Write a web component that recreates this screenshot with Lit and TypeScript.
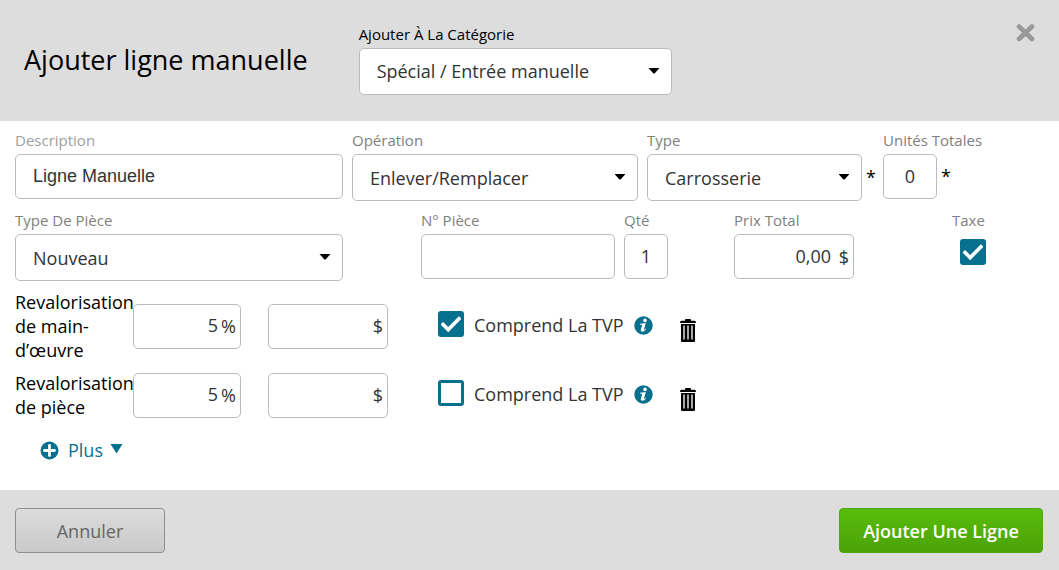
import { LitElement, html, css } from "lit";
import { customElement } from "lit/decorators.js";

const caret = html`<svg class="caret" width="12" height="6" viewBox="0 0 12 6" aria-hidden="true">
  <path d="M0.5 0h11L6.8 5.2q-.8.8-1.6 0z" fill="#000" />
</svg>`;

const infoIcon = html`<svg width="19" height="19" viewBox="0 0 19 19" aria-hidden="true">
  <circle cx="9.5" cy="9.5" r="9.2" fill="#08708f" />
  <circle cx="11" cy="4.4" r="1.8" fill="#fff" />
  <path
    d="M6.2 7.800l5.600-.8-1.800 6.400c-.1.5.1.7.5.4.4-.2.8-.7 1.100-1.100l.5.4c-.9 1.600-2.100 2.700-3.600 2.700-1.400 0-2-.9-1.600-2.200l1.100-3.900c.2-.7 0-.9-.6-.9h-1.400z"
    fill="#fff"
  />
</svg>`;

const trashIcon = html`<svg width="16" height="23" viewBox="0 0 16 23" aria-hidden="true">
  <path d="M5 1.8V.8Q5 0 6 0h4q1 0 1 .8v1h3.500q1.500 0 1.500 2.200H0q0-2.200 1.500-2.200z" fill="#000" />
  <path d="M1 5h14v17q0 1-1 1H2q-1 0-1-1z" fill="#000" />
  <path d="M4 6.500v14M8 6.500v14M12 6.500v14" stroke="#fff" stroke-width="1.300" fill="none" />
</svg>`;

@customElement("app-root")
export class AppRoot extends LitElement {
  static styles = css`
    :host {
      display: flex;
      flex-direction: column;
      min-height: 100vh;
      background: #fff;
      color: #000;
      font-family: "Open Sans", "Noto Sans", sans-serif;
      font-size: 18px;
      line-height: 24px;
    }
    * {
      box-sizing: border-box;
    }
    header {
      display: flex;
      align-items: center;
      padding: 24px 24px 26px;
      background: #ddd;
    }
    h1 {
      margin: 0;
      font-size: 27px;
      line-height: 36px;
      font-weight: 400;
    }
    .category {
      width: 313px;
      margin-left: 51px;
    }
    button {
      font-family: inherit;
      cursor: pointer;
    }
    .plain {
      display: flex;
      padding: 0;
      border: 0;
      background: none;
    }
    .close {
      align-self: flex-start;
      margin-left: auto;
    }
    main {
      flex: 1;
      padding: 9px 15px 28px;
    }
    .row {
      display: grid;
      column-gap: 9px;
      align-items: start;
      margin-bottom: 9px;
    }
    .first {
      grid-template-columns: 328fr 286fr 227fr 161px;
    }
    .second {
      grid-template-columns: 328fr 263fr 44px 177px 181px;
    }
    .part {
      padding-left: 78px;
      margin-left: -9px;
    }
    .price {
      padding-left: 57px;
    }
    .tax {
      padding-left: 89px;
    }
    .tax input {
      margin: 9px 8px 0;
    }
    .field label {
      display: block;
      margin-bottom: 4px;
      font-size: 15px;
      line-height: 20px;
      color: #808080;
      white-space: nowrap;
    }
    .field .muted {
      color: #a0a0a0;
    }
    .category.field label {
      color: #000;
    }
    .inline {
      display: flex;
      align-items: center;
      gap: 4px;
    }
    .star {
      width: 8px;
      padding-bottom: 2px;
    }
    .box {
      display: grid;
      flex: 1;
      align-items: center;
    }
    .box > * {
      grid-area: 1 / 1;
    }
    .caret,
    .suffix {
      justify-self: end;
      pointer-events: none;
    }
    .caret {
      margin: 0 12px 2px 0;
    }
    .suffix {
      margin-right: 5px;
      color: #333;
    }
    select,
    .text {
      width: 100%;
      min-width: 0;
      margin: 0;
      border: 1px solid #bbb;
      border-radius: 5px;
      background: #fff;
      color: #333;
      font: inherit;
      appearance: none;
    }
    select {
      height: 47px;
      padding: 0 30px 0 17px;
    }
    .category select {
      padding-bottom: 2px;
    }
    .text {
      height: 45px;
      padding: 0 17px;
    }
    .arial {
      font-family: "Liberation Sans", Arial, sans-serif;
    }
    .center {
      padding: 0 0 2px;
      text-align: center;
    }
    .text.units {
      width: 54px;
    }
    .right {
      padding: 0 22px 2px 4px;
      text-align: right;
    }
    .check {
      display: block;
      flex: none;
      width: 26px;
      height: 26px;
      border: 3px solid #08708f;
      border-radius: 3px;
      background: #fff;
      appearance: none;
      cursor: pointer;
    }
    .check:checked {
      background: #08708f
        url("data:image/svg+xml,%3Csvg xmlns='http://www.w3.org/2000/svg' viewBox='0 0 20 20'%3E%3Cpath d='M.8 9.200l6.400 6.400L19.200 3.500' fill='none' stroke='%23fff' stroke-width='3.600'/%3E%3C/svg%3E")
        center / 20px 20px no-repeat;
    }
    .markup {
      display: flex;
      align-items: center;
      margin-bottom: 9px;
    }
    .name {
      width: 118px;
    }
    .percent {
      flex: none;
      width: 108px;
      margin-right: 27px;
    }
    .amount {
      flex: none;
      width: 120px;
      margin-right: 50px;
    }
    .markup .check {
      margin: 0 10px 4px 0;
    }
    .tvp {
      margin: 0 10px 2px 0;
      color: #333;
    }
    .info {
      margin-bottom: 2px;
    }
    .trash {
      margin: 9px 0 0 27px;
    }
    .more {
      align-items: center;
      margin: 19px 0 0 25px;
      color: #08708f;
      font-size: 18px;
      line-height: 24px;
    }
    .more span {
      margin: 0 7px 0 9px;
    }
    footer {
      display: flex;
      justify-content: space-between;
      padding: 18px 16px 17px 15px;
      background: #ddd;
    }
    .action {
      height: 45px;
      border-radius: 4px;
      font-size: 18px;
      line-height: 24px;
      font-weight: 600;
    }
    .cancel {
      min-width: 150px;
      border: 1px solid #8f8f8f;
      background: linear-gradient(#dcdcdc, #c9c9c9);
      color: #666;
      font-weight: 500;
    }
    .submit {
      min-width: 204px;
      border: 1px solid #4fa80c;
      background: linear-gradient(#58bd0a, #4ca208);
      color: #fff;
    }
  `;

  private select(id: string, value: string) {
    return html`<div class="box">
      <select id=${id}>
        <option>${value}</option>
      </select>
      ${caret}
    </div>`;
  }

  private money(id: string, value: string, unit: string, label: string) {
    return html`<div class="box">
      <input class="text right" id=${id} .value=${value} aria-label=${label} />
      <span class="suffix">${unit}</span>
    </div>`;
  }

  private markup(id: string, name: string, checked: boolean) {
    return html`<div class="markup">
      <label class="name" for="${id}-rate">${name}</label>
      <div class="percent">${this.money(`${id}-rate`, "5", "%", name)}</div>
      <div class="amount">${this.money(`${id}-amount`, "", "$", name)}</div>
      <input type="checkbox" class="check" id="${id}-tvp" .checked=${checked} />
      <label class="tvp" for="${id}-tvp">Comprend La TVP</label>
      <button class="plain info" aria-label="Info">${infoIcon}</button>
      <button class="plain trash" aria-label="Supprimer">${trashIcon}</button>
    </div>`;
  }

  render() {
    return html`
      <header>
        <h1>Ajouter ligne manuelle</h1>
        <div class="field category">
          <label for="category">Ajouter À La Catégorie</label>
          ${this.select("category", "Spécial / Entrée manuelle")}
        </div>
        <button class="plain close" aria-label="Fermer">
          <svg width="19" height="18" viewBox="0 0 19 18" aria-hidden="true">
            <path d="M3 2.500l13 12.500M16 2.500l-13 12.500" stroke="#999" stroke-width="4.600" stroke-linecap="round" />
          </svg>
        </button>
      </header>
      <main>
        <div class="row first">
          <div class="field">
            <label class="muted" for="description">Description</label>
            <input class="text arial" id="description" .value=${"Ligne Manuelle"} />
          </div>
          <div class="field">
            <label for="operation">Opération</label>
            ${this.select("operation", "Enlever/Remplacer")}
          </div>
          <div class="field">
            <label for="type">Type</label>
            <div class="inline">${this.select("type", "Carrosserie")}<span class="star">*</span></div>
          </div>
          <div class="field">
            <label for="units">Unités Totales</label>
            <div class="inline">
              <input class="text center units" id="units" .value=${"0"} /><span class="star">*</span>
            </div>
          </div>
        </div>
        <div class="row second">
          <div class="field">
            <label for="part-type">Type De Pièce</label>
            ${this.select("part-type", "Nouveau")}
          </div>
          <div class="field part">
            <label for="part-number">N° Pièce</label>
            <input class="text" id="part-number" />
          </div>
          <div class="field">
            <label for="quantity">Qté</label>
            <input class="text center" id="quantity" .value=${"1"} />
          </div>
          <div class="field price">
            <label for="price">Prix Total</label>
            ${this.money("price", "0,00", "$", "Prix Total")}
          </div>
          <div class="field tax">
            <label for="tax">Taxe</label>
            <input type="checkbox" class="check" id="tax" .checked=${true} />
          </div>
        </div>
        ${this.markup("labor", "Revalorisation de main-d’œuvre", true)}
        ${this.markup("part", "Revalorisation de pièce", false)}
        <button class="plain more">
          <svg width="19" height="19" viewBox="0 0 19 19" aria-hidden="true">
            <circle cx="9.500" cy="9.500" r="9" fill="#08708f" />
            <path d="M9.500 4.500v10M4.500 9.500h10" stroke="#fff" stroke-width="2.800" stroke-linecap="round" />
          </svg>
          <span>Plus</span>
          <svg width="13" height="12" viewBox="0 0 13 12" aria-hidden="true">
            <path d="M0.500 0h12L6.500 9.500z" fill="#08708f" />
          </svg>
        </button>
      </main>
      <footer>
        <button class="action cancel">Annuler</button>
        <button class="action submit">Ajouter Une Ligne</button>
      </footer>
    `;
  }
}
